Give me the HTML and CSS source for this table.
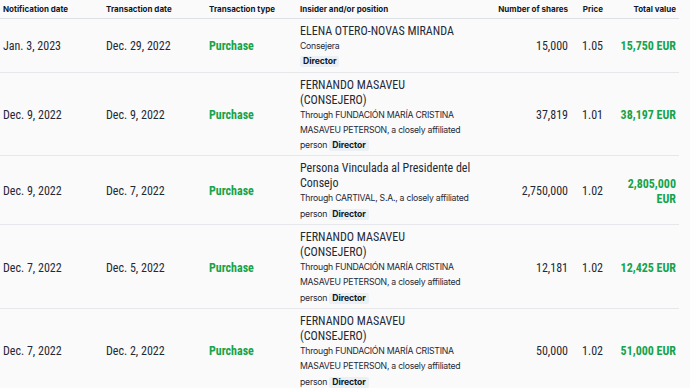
FILE: index.html
```html
<!DOCTYPE html>
<html>
<head>
<meta charset="utf-8">
<link rel="stylesheet" href="styles.css">
</head>
<body>
<table class="trades">
  <colgroup>
    <col class="c-notif"><col class="c-trans"><col class="c-type"><col class="c-insider"><col class="c-shares"><col class="c-price"><col class="c-total">
  </colgroup>
  <thead>
    <tr>
      <th>Notification date</th>
      <th>Transaction date</th>
      <th>Transaction type</th>
      <th>Insider and/or position</th>
      <th class="num">Number of shares</th>
      <th class="num">Price</th>
      <th class="num">Total value</th>
    </tr>
  </thead>
  <tbody>
    <tr>
      <td>Jan. 3, 2023</td>
      <td>Dec. 29, 2022</td>
      <td class="type">Purchase</td>
      <td class="insider">
        <div class="name">ELENA OTERO-NOVAS MIRANDA</div>
        <div class="desc">Consejera</div>
        <div class="desc"><span class="tag">Director</span></div>
      </td>
      <td class="num">15,000</td>
      <td class="num">1.05</td>
      <td class="num total">15,750 EUR</td>
    </tr>
    <tr>
      <td>Dec. 9, 2022</td>
      <td>Dec. 9, 2022</td>
      <td class="type">Purchase</td>
      <td class="insider">
        <div class="name">FERNANDO MASAVEU (CONSEJERO)</div>
        <div class="desc">Through FUNDACIÓN MARÍA CRISTINA MASAVEU PETERSON, a closely affiliated person <span class="tag">Director</span></div>
      </td>
      <td class="num">37,819</td>
      <td class="num">1.01</td>
      <td class="num total">38,197 EUR</td>
    </tr>
    <tr>
      <td>Dec. 9, 2022</td>
      <td>Dec. 7, 2022</td>
      <td class="type">Purchase</td>
      <td class="insider">
        <div class="name">Persona Vinculada al Presidente del Consejo</div>
        <div class="desc">Through CARTIVAL, S.A., a closely affiliated person <span class="tag">Director</span></div>
      </td>
      <td class="num">2,750,000</td>
      <td class="num">1.02</td>
      <td class="num total">2,805,000 EUR</td>
    </tr>
    <tr>
      <td>Dec. 7, 2022</td>
      <td>Dec. 5, 2022</td>
      <td class="type">Purchase</td>
      <td class="insider">
        <div class="name">FERNANDO MASAVEU (CONSEJERO)</div>
        <div class="desc">Through FUNDACIÓN MARÍA CRISTINA MASAVEU PETERSON, a closely affiliated person <span class="tag">Director</span></div>
      </td>
      <td class="num">12,181</td>
      <td class="num">1.02</td>
      <td class="num total">12,425 EUR</td>
    </tr>
    <tr>
      <td>Dec. 7, 2022</td>
      <td>Dec. 2, 2022</td>
      <td class="type">Purchase</td>
      <td class="insider">
        <div class="name">FERNANDO MASAVEU (CONSEJERO)</div>
        <div class="desc">Through FUNDACIÓN MARÍA CRISTINA MASAVEU PETERSON, a closely affiliated person <span class="tag">Director</span></div>
      </td>
      <td class="num">50,000</td>
      <td class="num">1.02</td>
      <td class="num total">51,000 EUR</td>
    </tr>
  </tbody>
</table>
</body>
</html>
```
FILE: styles.css
```css
html, body {
  margin: 0;
  padding: 0;
  background: #fafafa;
}
body {
  font-family: "Roboto Condensed", Inter, sans-serif;
  color: #1f2937;
}
.trades {
  border-collapse: collapse;
  table-layout: fixed;
  width: 679px;
}
.c-notif { width: 103px; }
.c-trans { width: 103px; }
.c-type { width: 91px; }
.c-insider { width: 179px; }
.c-shares { width: 95px; }
.c-price { width: 35px; }
.c-total { width: 73px; }
th {
  font-family: Inter, sans-serif;
  font-size: 8px;
  font-weight: 700;
  text-align: left;
  padding: 4px 3px 3px;
  line-height: 11px;
  border-bottom: 1px solid #dde1e6;
  color: #111827;
  white-space: nowrap;
}
td {
  font-size: 12px;
  line-height: 15px;
  padding: 5px 3px 2px;
  vertical-align: middle;
  border-bottom: 1px solid #e5e7eb;
}
.num { text-align: right; }
.type, .total {
  color: #16a34a;
  font-weight: 700;
}
.desc {
  font-family: Inter, sans-serif;
  font-size: 8.7px;
  letter-spacing: -0.25px;
  line-height: 15.3px;
}
.tag {
  display: inline-block;
  background: #ebf0f5;
  font-weight: 700;
  padding: 0 3px;
  line-height: 11px;
  border-radius: 2px;
  color: #111827;
  letter-spacing: -0.1px;
}
```
